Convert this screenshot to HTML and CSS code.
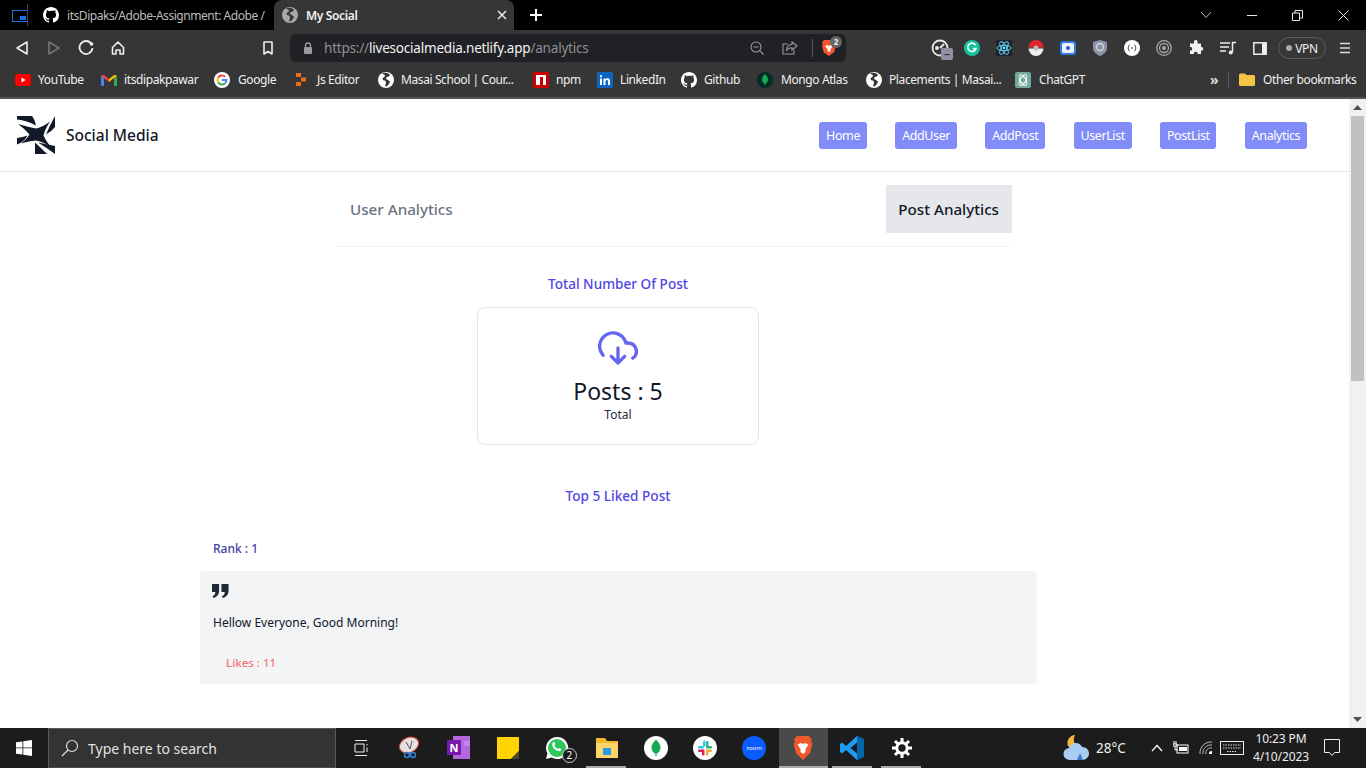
FILE: index.html
```html
<!DOCTYPE html>
<html lang="en">
<head>
<meta charset="utf-8">
<title>My Social</title>
<link rel="stylesheet" href="styles.css">
</head>
<body>
<svg class="defs" width="0" height="0" aria-hidden="true">
  <defs>
    <symbol id="globe" viewBox="0 0 16 16">
      <circle cx="8" cy="8" r="8" fill="currentColor"/>
      <path d="M4 1.500 7 3 6.500 5 4.500 6 5 8l2.500.8L8 11l-1 3 1.500.5L11 12l1-2.500L10 8 8 7l.5-2L11 4.500l1-2L9 1 6 .8Z" fill="var(--globe-cut,#363636)"/>
    </symbol>
    <symbol id="github" viewBox="0 0 16 16">
      <path fill="currentColor" d="M8 0C3.58 0 0 3.58 0 8c0 3.54 2.29 6.53 5.47 7.59.4.07.55-.17.55-.38v-1.34c-2.23.48-2.7-1.07-2.7-1.07-.36-.92-.89-1.17-.89-1.17-.73-.5.05-.49.05-.49.8.06 1.23.83 1.23.83.71 1.22 1.87.87 2.33.66.07-.52.28-.87.5-1.07-1.78-.2-3.64-.89-3.64-3.95 0-.87.31-1.59.82-2.15-.08-.2-.36-1.02.08-2.12 0 0 .67-.21 2.2.82A7.7 7.7 0 0 1 8 3.85c.68 0 1.36.09 2 .27 1.53-1.04 2.2-.82 2.2-.82.44 1.1.16 1.92.08 2.12.51.56.82 1.28.82 2.15 0 3.07-1.87 3.75-3.65 3.95.29.25.54.73.54 1.48v2.19c0 .21.15.46.55.38A8 8 0 0 0 16 8c0-4.42-3.58-8-8-8Z"/>
    </symbol>
  </defs>
</svg>

<div class="tabstrip">
  <svg class="pip" width="16" height="12" viewBox="0 0 16 12"><rect x=".5" y=".5" width="15" height="11" fill="none" stroke="#1a73e8"/><rect x="8" y="6" width="6" height="4" fill="#1a73e8"/></svg>
  <span class="tab-sep"></span>
  <div class="tab tab-idle">
    <svg class="tab-fav" width="16" height="16"><use href="#github"/></svg>
    <span class="tab-title">itsDipaks/Adobe-Assignment: Adobe /</span>
  </div>
  <div class="tab tab-active">
    <svg class="tab-fav tab-fav-grey" width="16" height="16"><use href="#globe"/></svg>
    <span class="tab-title tab-title-strong">My Social</span>
    <svg class="tab-close" width="10" height="10" viewBox="0 0 10 10"><path d="M1 1l8 8M9 1l-8 8" stroke="#e8e8e8" stroke-width="1.500"/></svg>
  </div>
  <svg class="tab-new" width="14" height="14" viewBox="0 0 14 14"><path d="M7 1v12M1 7h12" stroke="#fff" stroke-width="2"/></svg>
  <div class="win-controls">
    <svg width="12" height="8" viewBox="0 0 12 8"><path d="M1 1l5 5.500L11 1" fill="none" stroke="#bdbdbd"/></svg>
    <svg width="10" height="10" viewBox="0 0 10 10"><path d="M0 5.500h10" stroke="#e8e8e8"/></svg>
    <svg width="11" height="11" viewBox="0 0 11 11"><path d="M.5 3h7v7.500h-7zM3 3V.5h7.500V8H8" fill="none" stroke="#e8e8e8"/></svg>
    <svg width="11" height="11" viewBox="0 0 11 11"><path d="M.5.5l10 10M10.500.5l-10 10" stroke="#e8e8e8"/></svg>
  </div>
</div>

<div class="toolbar">
  <div class="nav-btns">
    <svg class="tb-icon" width="32" height="16" viewBox="0 0 32 16"><path d="M21 2v12L11 8Z" fill="none" stroke="#eee" stroke-width="1.600" stroke-linejoin="round"/></svg>
    <svg class="tb-icon" width="32" height="16" viewBox="0 0 32 16"><path d="M11 2v12l10-6Z" fill="none" stroke="#777" stroke-width="1.600" stroke-linejoin="round"/></svg>
    <svg class="tb-icon" width="32" height="16" viewBox="0 0 32 16"><path d="M21.500 4A6.500 6.500 0 1 0 22.500 8" fill="none" stroke="#eee" stroke-width="1.800"/><circle cx="21.500" cy="4" r="1.800" fill="#eee"/></svg>
    <svg class="tb-icon" width="32" height="16" viewBox="0 0 32 16"><path d="M10.500 7.500 16 2l5.500 5.500V14h-3.500v-4h-4v4h-3.500Z" fill="none" stroke="#eee" stroke-width="1.600" stroke-linejoin="round"/></svg>
  </div>
  <svg class="bookmark-btn" width="10" height="14" viewBox="0 0 10 14"><path d="M1 1h8v12L5 10.500 1 13Z" fill="none" stroke="#eee" stroke-width="1.600" stroke-linejoin="round"/></svg>
  <div class="omnibox">
    <svg class="lock" width="10" height="12" viewBox="0 0 10 12"><path d="M2.500 5V3.500a2.500 2.500 0 0 1 5 0V5" fill="none" stroke="#9a9a9a" stroke-width="1.300"/><rect x="1" y="5" width="8" height="7" rx="1" fill="#9a9a9a"/></svg>
    <span class="url"><span class="url-dim">https://</span><span class="url-host">livesocialmedia.netlify.app</span><span class="url-dim">/analytics</span></span>
    <svg class="omni-zoom" width="14" height="14" viewBox="0 0 14 14"><circle cx="6" cy="6" r="5" fill="none" stroke="#9a9a9a" stroke-width="1.100"/><path d="M3.500 6h5M10 10l3.500 3.500" stroke="#9a9a9a" stroke-width="1.100"/></svg>
    <svg class="omni-share" width="16" height="14" viewBox="0 0 16 14"><path d="M6 3H1v10h11V9" fill="none" stroke="#9a9a9a" stroke-width="1.100"/><path d="M10 1l5 4-5 4V6.800C7 6.800 5.300 8 4.500 10 4.500 6.500 6.500 3.800 10 3.200Z" fill="none" stroke="#9a9a9a" stroke-width="1.100"/></svg>
    <span class="omni-sep"></span>
    <span class="brave-wrap">
      <svg width="16" height="18" viewBox="0 0 16 18"><path d="M3 1h10l2 2.500-.8 2 .8 1-1.800 6.500L8 17l-5.200-3.500L1 7l.8-1L1 3.500Z" fill="#f1592a"/><path d="M4 7l2.500-1L8 7l1.500-1L12 7 9.500 10v2L8 13l-1.500-1v-2Z" fill="#fff"/></svg>
      <span class="brave-badge">2</span>
    </span>
  </div>
  <div class="extensions">
    <span class="ext ext-speed">
      <svg width="18" height="18" viewBox="0 0 18 18"><circle cx="9" cy="9" r="7.500" fill="none" stroke="#e8e8e8" stroke-width="1.800"/><path d="M9 9l4-4" stroke="#e8e8e8" stroke-width="2"/><circle cx="6" cy="9" r="2" fill="#e8e8e8"/></svg>
      <span class="ext-badge">--</span>
    </span>
    <span class="ext"><svg width="16" height="16" viewBox="0 0 16 16"><circle cx="8" cy="8" r="8" fill="#15c39a"/><path d="M11.500 5A4.200 4.200 0 1 0 12 8.500H9" fill="none" stroke="#fff" stroke-width="1.600"/></svg></span>
    <span class="ext"><svg width="16" height="16" viewBox="0 0 16 16"><rect width="16" height="16" fill="#20232a"/><g fill="none" stroke="#61dafb" stroke-width=".9"><ellipse cx="8" cy="8" rx="7" ry="2.700"/><ellipse cx="8" cy="8" rx="7" ry="2.700" transform="rotate(60 8 8)"/><ellipse cx="8" cy="8" rx="7" ry="2.700" transform="rotate(120 8 8)"/></g><circle cx="8" cy="8" r="1.400" fill="#61dafb"/></svg></span>
    <span class="ext"><svg width="16" height="16" viewBox="0 0 16 16"><path d="M.5 7.500a7.500 7.500 0 0 1 15 0Z" fill="#e4262c"/><path d="M.5 8.500a7.500 7.500 0 0 0 15 0Z" fill="#eee"/><circle cx="8" cy="8" r="2.600" fill="#bbb"/></svg></span>
    <span class="ext"><svg width="16" height="14" viewBox="0 0 16 14"><rect width="16" height="14" rx="3" fill="#2a7de1"/><rect x="2" y="2" width="12" height="10" rx="1.500" fill="#eaf1fb"/><circle cx="8" cy="7" r="2" fill="#2b59c3"/></svg></span>
    <span class="ext"><svg width="14" height="16" viewBox="0 0 14 16"><path d="M7 0l7 2v6c0 4-3.500 6.500-7 8-3.500-1.500-7-4-7-8V2Z" fill="#8a93a8"/><circle cx="7" cy="7" r="3.500" fill="none" stroke="#d5d9e2" stroke-width="1.300"/></svg></span>
    <span class="ext"><svg width="16" height="16" viewBox="0 0 16 16"><circle cx="8" cy="8" r="8" fill="#fff"/><path d="M5.500 5C4 5 5 8 3.800 8 5 8 4 11 5.500 11M10.500 5c1.500 0 .5 3 1.700 3-1.200 0-.2 3-1.700 3" fill="none" stroke="#222" stroke-width=".9"/><circle cx="8" cy="8" r=".8" fill="#222"/></svg></span>
    <span class="ext"><svg width="16" height="16" viewBox="0 0 16 16"><g fill="none" stroke="#a8a8a8"><circle cx="8" cy="8" r="7.300" stroke-width="1.300"/><circle cx="8" cy="8" r="4.500" stroke-width="1.300"/></g><circle cx="8" cy="8" r="2" fill="#a8a8a8"/></svg></span>
    <span class="ext"><svg width="16" height="16" viewBox="0 0 16 16"><path fill="#f2f2f2" d="M6 1.500a1.800 1.800 0 0 1 3.500 0V3.500h3.500v3.500a1.800 1.800 0 1 1 0 3.500V14H9.500a1.800 1.800 0 1 0-3.500 0H2v-3.500a1.800 1.800 0 1 0 0-3.500V3.500h4Z"/></svg></span>
    <span class="ext"><svg width="16" height="14" viewBox="0 0 16 14"><path d="M0 2h10M0 6h9M0 10h6" stroke="#eee" stroke-width="1.500"/><path d="M12.500 11V1.500H16" fill="none" stroke="#eee" stroke-width="1.500"/><circle cx="10.800" cy="11.500" r="2" fill="#eee"/></svg></span>
    <span class="ext"><svg width="14" height="13" viewBox="0 0 14 13"><rect x=".8" y=".8" width="12.400" height="11.400" fill="none" stroke="#eee" stroke-width="1.500"/><rect x="9" y="1" width="4" height="11" fill="#eee"/></svg></span>
  </div>
  <span class="vpn"><span class="vpn-dot"></span>VPN</span>
  <svg class="menu" width="12" height="12" viewBox="0 0 12 12"><path d="M1 1.500h10M1 6h10M1 10.500h10" stroke="#ddd" stroke-width="1.600"/></svg>
</div>

<div class="bookmarks">
  <div class="bm-grid">
    <span class="bm"><svg width="16" height="12" viewBox="0 0 16 12"><rect width="16" height="12" rx="3" fill="#f00"/><path d="M6.500 3.500v5l4-2.500Z" fill="#fff"/></svg>YouTube</span>
    <span class="bm"><svg width="16" height="12" viewBox="0 0 16 12"><path d="M0 1.500 3 1v11H1a1 1 0 0 1-1-1Z" fill="#4285f4"/><path d="M13 1l3 .5V11a1 1 0 0 1-1 1h-2Z" fill="#34a853"/><path d="M0 1.500 3 1l5 4 1 3-1 0L0 2Z" fill="#ea4335"/><path d="M8 5l5-4 3 .5L8 8Z" fill="#fbbc04"/></svg>itsdipakpawar</span>
    <span class="bm bm-wide"><svg width="16" height="16" viewBox="0 0 16 16"><circle cx="8" cy="8" r="8" fill="#fff"/><path d="M8 8h4.500a4.600 4.600 0 0 1-1.300 3.200" fill="none" stroke="#4285f4" stroke-width="1.800"/><path d="M11.200 11.200A4.500 4.500 0 0 1 4.100 10.300" fill="none" stroke="#34a853" stroke-width="1.800"/><path d="M4.100 10.300a4.500 4.500 0 0 1 0-4.600" fill="none" stroke="#fbbc04" stroke-width="1.800"/><path d="M4.100 5.700A4.500 4.500 0 0 1 11.200 4.800" fill="none" stroke="#ea4335" stroke-width="1.800"/></svg>Google</span>
    <span class="bm bm-tight"><svg width="12" height="16" viewBox="0 0 12 16"><path d="M1 1h5v4H1zM6 5.500h5v4H6zM1 10h5v4H1z" fill="#f26a1b"/></svg>Js Editor</span>
    <span class="bm"><svg class="white-globe" width="16" height="16"><use href="#globe"/></svg>Masai School | Cour...</span>
    <span class="bm"><svg width="16" height="16" viewBox="0 0 16 16"><rect width="16" height="16" fill="#cb0000"/><rect x="3" y="3" width="10" height="10" fill="#fff"/><rect x="7" y="5" width="3" height="8" fill="#cb0000"/></svg>npm</span>
    <span class="bm"><svg width="16" height="16" viewBox="0 0 16 16"><rect width="16" height="16" rx="1.500" fill="#0a66c2"/><path d="M3 6.500h2V13H3zM3 3.200h2v2H3zM6.500 6.500h2v1c.5-.8 1.200-1.200 2.200-1.200 1.500 0 2.300 1 2.300 2.800V13h-2V9.500c0-.9-.3-1.500-1.100-1.500s-1.400.6-1.400 1.600V13h-2Z" fill="#fff"/></svg>LinkedIn</span>
    <span class="bm"><svg class="white-icon" width="16" height="16"><use href="#github"/></svg>Github</span>
    <span class="bm bm-wide"><svg width="16" height="16" viewBox="0 0 16 16"><circle cx="8" cy="8" r="8" fill="#032b25"/><path d="M8 2c2 2 3 3.700 3 5.500 0 2.200-1.500 3.700-2.700 4.500v2h-.6v-2C6.500 11.200 5 9.700 5 7.500 5 5.700 6 4 8 2Z" fill="#13aa52"/></svg>Mongo Atlas</span>
    <span class="bm"><svg class="white-globe" width="16" height="16"><use href="#globe"/></svg>Placements | Masai...</span>
    <span class="bm bm-wide"><svg width="16" height="16" viewBox="0 0 16 16"><rect width="16" height="16" rx="2" fill="#74aa9c"/><g fill="none" stroke="#fff" stroke-width=".9"><circle cx="8" cy="8" r="3.300"/><ellipse cx="8" cy="8" rx="5.800" ry="2.800" transform="rotate(60 8 8)"/><ellipse cx="8" cy="8" rx="5.800" ry="2.800" transform="rotate(120 8 8)"/></g></svg>ChatGPT</span>
  </div>
  <span class="bm-more">»</span>
  <span class="bm-sep"></span>
  <span class="bm bm-other"><svg width="16" height="13" viewBox="0 0 16 13"><path d="M0 2a1.500 1.500 0 0 1 1.500-1.500H6L7.500 2h7A1.500 1.500 0 0 1 16 3.500v8a1.500 1.500 0 0 1-1.500 1.500h-13A1.500 1.500 0 0 1 0 11.500Z" fill="#f6c445"/></svg>Other bookmarks</span>
</div>
<div class="chrome-edge"></div>

<div class="viewport">
  <div class="page">
    <header class="site-header">
      <div class="brand">
        <svg class="logo" width="38" height="38" viewBox="0 0 38 38">
          <path fill="#111827" d="M1 8Q11 11 19 12.500Q26 11 33 5.500Q28 13 26.500 19.500Q29 25 33 30Q25 25.500 19 24.500Q12 25 4 27.500Q10 23 12.500 18.500Q8 13 1 8Z"/>
          <path fill="#111827" d="M0 0H15Q17.500 3 19 9.500Q10 4.500 0 3.500Z"/>
          <path fill="#111827" d="M38 0V11Q35 15 29 18.500Q33 9 38 0Z"/>
          <path fill="#111827" d="M0 22Q6 21 10.500 19.500Q7 26 0 28.500Z"/>
          <path fill="#111827" d="M18 38V26.500Q23 31 30 38Z"/>
          <path fill="#111827" d="M21 26.500Q30 28 38 30V38Q30 32 21 26.500Z"/>
        </svg>
        <span class="brand-name">Social Media</span>
      </div>
      <nav class="site-nav">
        <a class="nav-link">Home</a>
        <a class="nav-link">AddUser</a>
        <a class="nav-link">AddPost</a>
        <a class="nav-link">UserList</a>
        <a class="nav-link">PostList</a>
        <a class="nav-link">Analytics</a>
      </nav>
    </header>

    <div class="tabs">
      <button class="tabs-item">User Analytics</button>
      <button class="tabs-item tabs-item-on">Post Analytics</button>
    </div>

    <section class="analytics">
      <h2 class="section-title title-first">Total Number Of Post</h2>
      <div class="stat-card">
        <svg class="cloud" width="40" height="40" viewBox="0 0 24 24" fill="none" stroke="#6366f1" stroke-width="2" stroke-linecap="round" stroke-linejoin="round">
          <path d="M8 17l4 4 4-4M12 12v9"/>
          <path d="M20.880 18.090A5 5 0 0 0 18 9h-1.260A8 8 0 1 0 3 16.290"/>
        </svg>
        <div class="stat-value">Posts : 5</div>
        <div class="stat-label">Total</div>
      </div>
      <h2 class="section-title title-second">Top 5 Liked Post</h2>
      <div class="rank">Rank : 1</div>
      <article class="post">
        <svg class="quote" width="17" height="14" viewBox="0 0 18 15" preserveAspectRatio="none"><path fill="#1f2937" d="M0 0h7.500v7.500C7.500 11.500 5 14 1.500 15L.5 13c2-.8 3-2 3-4.500H0ZM10 0h7.500v7.500c0 4-2.500 6.500-6 7.500l-1-2c2-.8 3-2 3-4.500H10Z"/></svg>
        <p class="post-text">Hellow Everyone, Good Morning!</p>
        <p class="post-likes">Likes : 11</p>
      </article>
    </section>
  </div>
  <div class="scrollbar">
    <span class="sb-btn"><svg width="9" height="5" viewBox="0 0 9 5"><path d="M4.500 0 9 5H0Z" fill="#505050"/></svg></span>
    <div class="sb-track"><div class="sb-thumb"></div></div>
    <span class="sb-btn"><svg width="9" height="5" viewBox="0 0 9 5"><path d="M4.500 5 9 0H0Z" fill="#505050"/></svg></span>
  </div>
</div>

<footer class="taskbar">
  <span class="start"><svg width="16" height="16" viewBox="0 0 16 16"><path fill="#fff" d="M0 2.300 6.500 1.400v6.100H0ZM7.300 1.300 16 0v7.500H7.300ZM0 8.300h6.500v6.300L0 13.700ZM7.300 8.300H16V16l-8.700-1.200Z"/></svg></span>
  <div class="search">
    <svg width="18" height="18" viewBox="0 0 18 18"><circle cx="11" cy="7" r="5.500" fill="none" stroke="#ddd" stroke-width="1.200"/><path d="M7 11 1 17" stroke="#ddd" stroke-width="1.200"/></svg>
    <span>Type here to search</span>
  </div>
  <div class="task-icons">
    <span class="task"><svg width="16" height="16" viewBox="0 0 16 16"><path d="M2 .5h12M2 15.500h12M2 4h9v8H2zM14 4v1.500M14 7.500V12" fill="none" stroke="#eee"/></svg></span>
    <span class="task"><svg width="24" height="24" viewBox="0 0 24 24"><ellipse cx="11" cy="9" rx="10" ry="7.500" fill="#e8dfe0" stroke="#c9423a" transform="rotate(-25 11 9)"/><path d="M14 5 12 13M8 6l4 7" stroke="#555"/><circle cx="9" cy="19" r="2.500" fill="none" stroke="#2a86d8" stroke-width="1.500"/><circle cx="15" cy="19" r="2.500" fill="none" stroke="#2a86d8" stroke-width="1.500"/></svg></span>
    <span class="task"><svg width="24" height="24" viewBox="0 0 24 24"><rect x="6" width="17" height="23" fill="#b368e0"/><rect x="0" y="4" width="14" height="15" fill="#7719aa"/><path d="M17 5h6v5h-6z" fill="#c885ec"/><text class="task-n" x="7" y="16" text-anchor="middle">N</text></svg></span>
    <span class="task"><svg width="22" height="22" viewBox="0 0 22 22"><path d="M0 0h22v14l-8 8H0Z" fill="#ffd400"/><path d="M22 14v8h-8Z" fill="#4a4434"/></svg></span>
    <span class="task"><svg width="24" height="24" viewBox="0 0 24 24"><path d="M12 1a11 11 0 0 0-9.500 16.500L1 23l5.700-1.500A11 11 0 1 0 12 1Z" fill="#fff"/><circle cx="12" cy="12" r="9" fill="#2fc75c"/><path d="M8 6.500c1-.8 1.700-.5 2.300 1.500l-1 1.300c.6 1.500 2 3 3.700 3.700l1.300-1c2 .7 2.400 1.400 1.500 2.400-1 1.200-3 1-5.500-.7C8 12 6.300 8.500 8 6.500Z" fill="#fff"/></svg><span class="wa-badge">2</span></span>
    <span class="task task-open"><svg width="22" height="20" viewBox="0 0 22 20"><path d="M0 0h9l2 3h11v17H0Z" fill="#f5b92a"/><path d="M0 5h22v15H0Z" fill="#fcd666"/><rect x="7" y="10" width="8" height="7" fill="#2b9ae8"/></svg></span>
    <span class="task"><svg width="24" height="24" viewBox="0 0 24 24"><circle cx="12" cy="12" r="12" fill="#fff"/><path d="M12 3.500c3 3 4.500 5.500 4.500 8 0 3.500-2.500 5.500-4 6.500v2.500h-1V18c-1.500-1-4-3-4-6.500 0-2.500 1.500-5 4.500-8Z" fill="#13aa52"/></svg></span>
    <span class="task"><svg width="24" height="24" viewBox="0 0 24 24"><circle cx="12" cy="12" r="12" fill="#fff"/><rect x="5" y="10" width="6" height="2.500" rx="1.200" fill="#36c5f0"/><rect x="10" y="4.500" width="2.500" height="6" rx="1.200" fill="#36c5f0"/><rect x="13" y="5" width="2.500" height="6" rx="1.200" fill="#2eb67d"/><rect x="13" y="10" width="6" height="2.500" rx="1.200" fill="#2eb67d"/><rect x="13" y="13.500" width="6" height="2.500" rx="1.200" fill="#ecb22e"/><rect x="13" y="13.500" width="2.500" height="6" rx="1.200" fill="#ecb22e"/><rect x="5" y="13.500" width="6" height="2.500" rx="1.200" fill="#e01e5a"/><rect x="9" y="13.500" width="2.500" height="6" rx="1.200" fill="#e01e5a"/></svg></span>
    <span class="task"><svg width="24" height="24" viewBox="0 0 24 24"><circle cx="12" cy="12" r="12" fill="#0b5cff"/><text class="task-zoom" x="12" y="14" text-anchor="middle">zoom</text></svg></span>
    <span class="task task-on"><svg width="20" height="24" viewBox="0 0 20 24"><path d="M4 0h12l3 3.500-1 2.500 1.500 1.500L17 17l-7 7-7-7L.5 7.500 2 6 1 3.500Z" fill="#f1592a"/><path d="M4.500 8.500 8 7l2 1 2-1 3.500 1.500L12.500 13v3L10 18l-2.500-2v-3Z" fill="#fff"/></svg></span>
    <span class="task task-open"><svg width="24" height="24" viewBox="0 0 24 24"><path d="M17 0 24 3.500v17L17 24 6 14l-4 3.500L0 16V8l2-1.500L6 10Z" fill="#1f9cf0"/><path d="M17 6.500 10.500 12l6.500 5.500Z" fill="#1c1c1c"/><path d="M17 0 24 3.500v17L17 24Z" fill="#0065a9"/></svg></span>
    <span class="task task-open"><svg width="20" height="20" viewBox="0 0 20 20"><circle cx="10" cy="10" r="5.200" fill="none" stroke="#fff" stroke-width="3"/><path d="M10 0v4M10 16v4M0 10h4M16 10h4M3 3l2.800 2.800M14.200 14.200 17 17M17 3l-2.800 2.800M5.800 14.200 3 17" stroke="#fff" stroke-width="3"/></svg></span>
  </div>
  <div class="tray">
    <svg class="weather" width="26" height="26" viewBox="0 0 26 26"><path d="M12 0a8 8 0 0 0-7 11 8 8 0 0 0 11 1A8 8 0 0 1 12 0Z" fill="#f5b73c"/><path d="M7 25a6 6 0 0 1-1-12 7 7 0 0 1 13-1 6.500 6.500 0 0 1 1 13Z" fill="#a9cdf2"/><path d="M14 25l3-7 3 7Z" fill="#3a78d0"/></svg>
    <span class="temp">28°C</span>
    <svg class="tray-i" width="12" height="8" viewBox="0 0 12 8"><path d="M1 7l5-5.500L11 7" fill="none" stroke="#fff" stroke-width="1.200"/></svg>
    <svg class="tray-i" width="16" height="14" viewBox="0 0 16 14"><rect x="4" y="4" width="11" height="8" fill="none" stroke="#fff"/><rect x="6" y="6" width="8" height="4" fill="#fff"/><path d="M1 0v3M3 0v3M0 3h4v2H0zM2 5v4h3" stroke="#fff" fill="none"/></svg>
    <svg class="tray-i tray-wifi" width="15" height="14" viewBox="0 0 15 14"><g fill="none" stroke="#bbb"><path d="M1 13A11 11 0 0 1 13 1"/><path d="M4 13A8 8 0 0 1 13 4"/><path d="M7 13A5 5 0 0 1 13 7"/></g><path d="M10 13A2.500 2.500 0 0 1 13 10V13Z" fill="#fff"/></svg>
    <svg class="tray-kbd" width="24" height="14" viewBox="0 0 24 14"><rect x=".5" y=".5" width="23" height="13" fill="none" stroke="#eee"/><path d="M3 4h18M3 7h18M7 10.500h10" stroke="#ddd" stroke-dasharray="1.500 1"/></svg>
    <div class="clock"><span>10:23 PM</span><span>4/10/2023</span></div>
    <svg class="notif" width="16" height="18" viewBox="0 0 16 18"><path d="M.5.500h15v13h-5L8 16.500 5.500 13.500h-5Z" fill="none" stroke="#eee"/></svg>
  </div>
</footer>
</body>
</html>
```
FILE: styles.css
```css
* { box-sizing: border-box; }
html, body { margin: 0; height: 768px; overflow: hidden; }
body {
  display: flex;
  flex-direction: column;
  width: 1366px;
  font-family: "Noto Sans", "Open Sans", sans-serif;
  background: #fff;
  color: #111827;
}
.defs { position: absolute; }
svg { display: block; flex: none; }

/* tab strip */
.tabstrip { height: 30px; background: #000; display: flex; align-items: stretch; flex: none; color: #fff; }
.pip { margin: 10px 0 0 12px; }
.tab-sep { width: 1px; height: 22px; margin: 4px 0 0 -1px; background: #444; }
.tab { display: flex; align-items: center; font-size: 12px; overflow: hidden; }
.tab-idle { width: 246px; padding-left: 15px; }
.tab-fav { margin-right: 8px; color: #fff; }
.tab-fav-grey { color: #a8a8a8; }
.tab-title { white-space: nowrap; color: #bdbdbd; letter-spacing: -.35px; }
.tab-idle .tab-title { letter-spacing: -.45px; }
.tab-active { width: 240px; padding: 0 7px 0 8px; background: #363636; border-radius: 8px 8px 0 0; }
.tab-title-strong { color: #f2f2f2; font-weight: 600; flex: 1; }
.tab-new { margin: 8px 0 0 15px; }
.win-controls { margin-left: auto; display: flex; align-items: center; gap: 35px; padding-right: 17px; height: 30px; }

/* toolbar */
.toolbar { height: 36px; background: #363636; display: flex; align-items: center; flex: none; padding-left: 6px; }
.nav-btns { display: flex; width: 252px; }
.bookmark-btn { margin-left: 5px; }
.omnibox {
  width: 556px; height: 28px; margin-left: 17px;
  background: #202124; border-radius: 5px;
  display: flex; align-items: center; padding-left: 13px;
  font-size: 13.500px;
}
.url { margin-left: 11px; width: 426px; white-space: nowrap; letter-spacing: -.2px; }
.url-dim { color: #909090; }
.url-host { color: #f2f2f2; }
.omni-share { margin-left: 18px; }
.omni-sep { width: 1px; height: 18px; background: #555; margin-left: 14px; }
.brave-wrap { position: relative; margin-left: 8px; }
.brave-badge {
  position: absolute; left: 9px; top: -3px;
  width: 12px; height: 12px; border-radius: 50%;
  background: #666; color: #eee; font-size: 8px; font-weight: 700; line-height: 12px; text-align: center;
}
.extensions { display: flex; margin-left: 78px; }
.ext { position: relative; width: 32px; display: flex; align-items: center; justify-content: center; }
.ext-badge {
  position: absolute; left: 17px; top: 9px;
  width: 12px; height: 12px; border-radius: 2px;
  background: #8f8fa3; color: #222; font-size: 8px; line-height: 11px; text-align: center; font-weight: 700;
}
.vpn {
  margin-left: 2px; width: 48px; height: 22px;
  border: 1px solid #5b5b66; border-radius: 11px;
  display: flex; align-items: center; justify-content: center; gap: 3px;
  font-size: 12px; color: #eee; letter-spacing: -.3px;
}
.vpn-dot { width: 6px; height: 6px; border-radius: 50%; background: #aaa; }
.menu { margin-left: 13px; }

/* bookmarks */
.bookmarks { height: 31px; padding: 0 0 4px 15px; background: #363636; display: flex; align-items: center; flex: none; font-size: 12px; color: #f0f0f0; }
.bm-grid {
  display: grid; width: 1195px;
  grid-template-columns: 86px 113px 81px 83px 155px 64px 84px 76px 109px 149px 1fr;
}
.bm { display: flex; align-items: center; gap: 7px; white-space: nowrap; letter-spacing: -.4px; height: 18px; }
.bm-wide { gap: 8px; }
.bm-tight svg { margin-right: 3px; }
.white-globe { color: #fff; }
.white-icon { color: #fff; }
.bm-more { font-size: 14px; font-weight: 700; color: #ddd; width: 18px; line-height: 18px; }
.bm-sep { width: 1px; height: 16px; background: #5a5a5a; margin-right: 10px; }
.bm-other { gap: 8px; }
.chrome-edge { height: 2px; background: #555; flex: none; }

/* page */
.viewport { flex: 1; display: flex; min-height: 0; background: #fff; }
.page { flex: 1; min-width: 0; overflow: hidden; }
.site-header {
  height: 73px; display: flex; align-items: center; justify-content: space-between;
  padding: 0 42px 0 17px; border-bottom: 1px solid #e5e7eb;
}
.brand { display: flex; align-items: center; gap: 11px; }
.brand-name { font-size: 15.500px; font-weight: 500; color: #111827; }
.site-nav { display: flex; gap: 28.500px; }
.nav-link {
  height: 27px; padding: 0 6.800px; border-radius: 3px;
  background: #818cf8; color: #fff; font-size: 12.500px; line-height: 27px; letter-spacing: -.4px;
}
.tabs {
  width: 676px; margin: 13px 0 0 336px; padding-bottom: 13px;
  display: flex; justify-content: space-between;
  border-bottom: 1px solid #f3f4f6;
}
.tabs-item {
  height: 48px; padding: 0 13px 0 14px; border: 0; background: none;
  font: 500 15.200px "Noto Sans", sans-serif; color: #6b7280;
}
.tabs-item-on { padding: 0 13px 0 12px; background: #e5e7eb; color: #111827; }
.analytics { width: 836px; margin-left: 200px; display: flex; flex-direction: column; align-items: center; }
.section-title { margin: 0; font-size: 13.600px; font-weight: 500; color: #4f46e5; line-height: 20px; }
.title-first { margin-top: 27px; }
.title-second { margin-top: 41px; }
.stat-card {
  width: 282px; height: 138px; margin-top: 13px;
  border: 1px solid #e5e7eb; border-radius: 8px;
  display: flex; flex-direction: column; align-items: center; padding-top: 20px;
}
.stat-value { font-size: 23px; line-height: 32px; margin-top: 7px; color: #111827; }
.stat-label { font-size: 12px; line-height: 16px; color: #1f2937; }
.rank { align-self: flex-start; margin: 33px 0 0 13px; font-size: 12px; line-height: 20px; font-weight: 500; color: #3f3f9e; }
.post { align-self: flex-start; width: 837px; height: 113px; margin-top: 12px; padding: 13px 12px; background: #f3f4f6; border-radius: 4px; }
.post-text { margin: 16px 0 0 1px; font-size: 12px; line-height: 18px; color: #111827; }
.post-likes { margin: 22px 0 0 14px; font-size: 11.500px; line-height: 18px; font-weight: 500; color: #f87171; }

/* scrollbar */
.scrollbar { width: 17px; background: #f1f1f1; display: flex; flex-direction: column; flex: none; }
.sb-btn { height: 17px; display: flex; align-items: center; justify-content: center; flex: none; }
.sb-track { flex: 1; }
.sb-thumb { height: 265px; background: #c1c1c1; margin: 0 2px 0 2px; }

/* taskbar */
.taskbar { height: 40px; background: #1c1c1c; display: flex; align-items: center; flex: none; color: #eee; }
.start { width: 48px; display: flex; justify-content: center; }
.search {
  width: 288px; height: 40px; display: flex; align-items: center; gap: 9px; padding-left: 12px;
  background: #333; border: 1px solid #5a5a5a; border-bottom-color: #4a4a4a;
  font-size: 14px; color: #e2e2e2;
}
.task-icons { display: flex; }
.task { position: relative; width: 49.200px; height: 40px; display: flex; align-items: center; justify-content: center; }
.task-n { font: 700 11px "Noto Sans", sans-serif; fill: #fff; }
.task-zoom { font: 6px "Noto Sans", sans-serif; fill: #fff; }
.wa-badge {
  position: absolute; left: 29px; top: 20px; width: 15px; height: 15px; border-radius: 50%;
  background: #1c1c1c; border: 1px solid #ccc; font-size: 10px; line-height: 13px; text-align: center; color: #fff;
}
.task-on { background: #4a4a4a; box-shadow: inset 0 -2px 0 #aaa; }
.task-open::after { content: ""; position: absolute; left: 4px; right: 5px; bottom: 0; height: 2px; background: #aaa; }
.tray { margin-left: auto; display: flex; align-items: center; }
.temp { font-size: 13.500px; margin-left: 7px; width: 55px; }
.tray-i { margin-right: 10px; }
.tray-wifi { margin-right: 6px; }
.clock { display: flex; flex-direction: column; align-items: center; width: 64px; margin-left: 5px; font-size: 12px; line-height: 18px; letter-spacing: -.1px; }
.notif { margin: 0 26px 0 11px; }
```
